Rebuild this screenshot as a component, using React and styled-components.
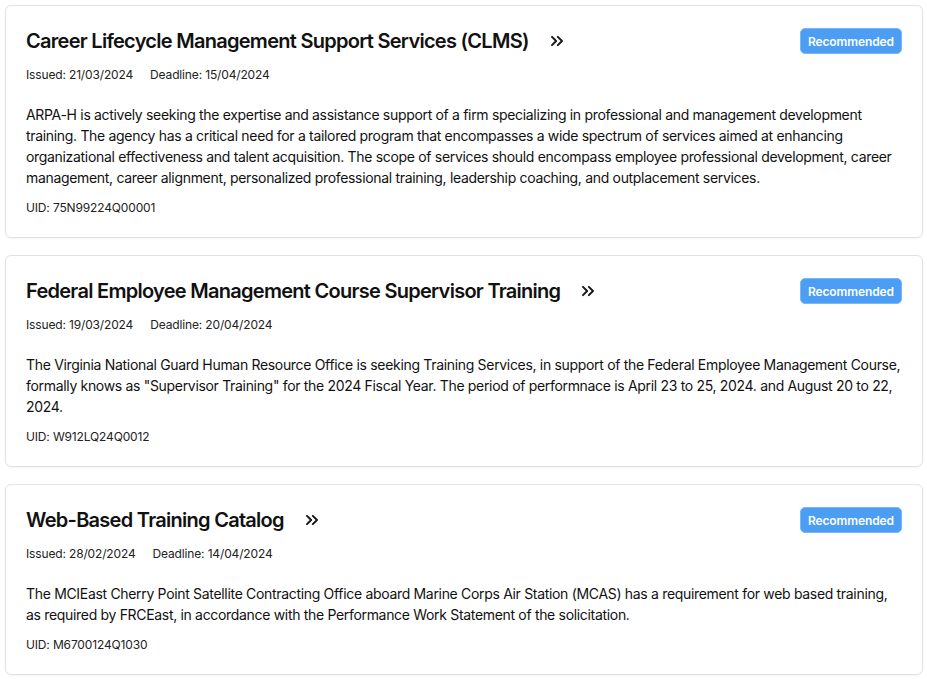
import React from "react";
import styled, { createGlobalStyle } from "styled-components";
import { ChevronsRight } from "lucide-react";

const GlobalStyle = createGlobalStyle`
  body {
    margin: 0;
    background: #ffffff;
    font-family: Inter, "Noto Sans", "Liberation Sans", sans-serif;
    color: #111111;
  }
`;

const List = styled.div`
  display: flex;
  flex-direction: column;
  gap: 17px;
  padding: 5px 4px 5px 5px;
`;

const Card = styled.div`
  border: 1px solid #e2e2e2;
  border-radius: 6px;
  padding: 20px 20px 20px 20px;
  background: #fff;
  box-shadow: 0 1px 2px rgba(0, 0, 0, 0.04);
`;

const Header = styled.div`
  display: flex;
  align-items: center;
  justify-content: space-between;
  min-height: 30px;
`;

const TitleRow = styled.div`
  display: flex;
  align-items: center;
  gap: 18px;
`;

const Title = styled.h2`
  margin: 0;
  font-size: 20px;
  font-weight: 600;
  letter-spacing: -0.72px;
  color: #111;
`;

const Arrow = styled.span`
  display: flex;
  align-items: center;
  color: #1a1a1a;
`;

const Badge = styled.span`
  background: #4b9ef4;
  color: #fff;
  font-size: 12px;
  font-weight: 600;
  letter-spacing: -0.1px;
  border: 1px solid #7ab7f7;
  border-radius: 5px;
  padding: 0 7px;
  height: 24px;
  display: inline-flex;
  align-items: center;
`;

const Dates = styled.div`
  display: flex;
  gap: 17px;
  margin-top: 10px;
  font-size: 12px;
  line-height: 18px;
  letter-spacing: -0.15px;
  color: #222;
`;

const Description = styled.p`
  margin: 20px 0 0;
  font-size: 14px;
  line-height: 21px;
  letter-spacing: -0.32px;
  color: #111;
`;

const Uid = styled.div`
  margin-top: 11px;
  font-size: 12px;
  line-height: 18px;
  letter-spacing: -0.15px;
  color: #222;
`;

const items = [
  {
    title: "Career Lifecycle Management Support Services (CLMS)",
    issued: "21/03/2024",
    deadline: "15/04/2024",
    text: "ARPA-H is actively seeking the expertise and assistance support of a firm specializing in professional and management development training. The agency has a critical need for a tailored program that encompasses a wide spectrum of services aimed at enhancing organizational effectiveness and talent acquisition. The scope of services should encompass employee professional development, career management, career alignment, personalized professional training, leadership coaching, and outplacement services.",
    uid: "75N99224Q00001",
  },
  {
    title: "Federal Employee Management Course Supervisor Training",
    issued: "19/03/2024",
    deadline: "20/04/2024",
    text: 'The Virginia National Guard Human Resource Office is seeking Training Services, in support of the Federal Employee Management Course, formally knows as "Supervisor Training" for the 2024 Fiscal Year. The period of performnace is April 23 to 25, 2024. and August 20 to 22, 2024.',
    uid: "W912LQ24Q0012",
  },
  {
    title: "Web-Based Training Catalog",
    issued: "28/02/2024",
    deadline: "14/04/2024",
    text: "The MCIEast Cherry Point Satellite Contracting Office aboard Marine Corps Air Station (MCAS) has a requirement for web based training, as required by FRCEast, in accordance with the Performance Work Statement of the solicitation.",
    uid: "M6700124Q1030",
  },
];

function OpportunityCard({ item }) {
  return (
    <Card>
      <Header>
        <TitleRow>
          <Title>{item.title}</Title>
          <Arrow>
            <ChevronsRight size={20} strokeWidth={2.4} />
          </Arrow>
        </TitleRow>
        <Badge>Recommended</Badge>
      </Header>
      <Dates>
        <span>Issued: {item.issued}</span>
        <span>Deadline: {item.deadline}</span>
      </Dates>
      <Description>{item.text}</Description>
      <Uid>UID: {item.uid}</Uid>
    </Card>
  );
}

export default function App() {
  return (
    <>
      <GlobalStyle />
      <List>
        {items.map((item) => (
          <OpportunityCard key={item.uid} item={item} />
        ))}
      </List>
    </>
  );
}
